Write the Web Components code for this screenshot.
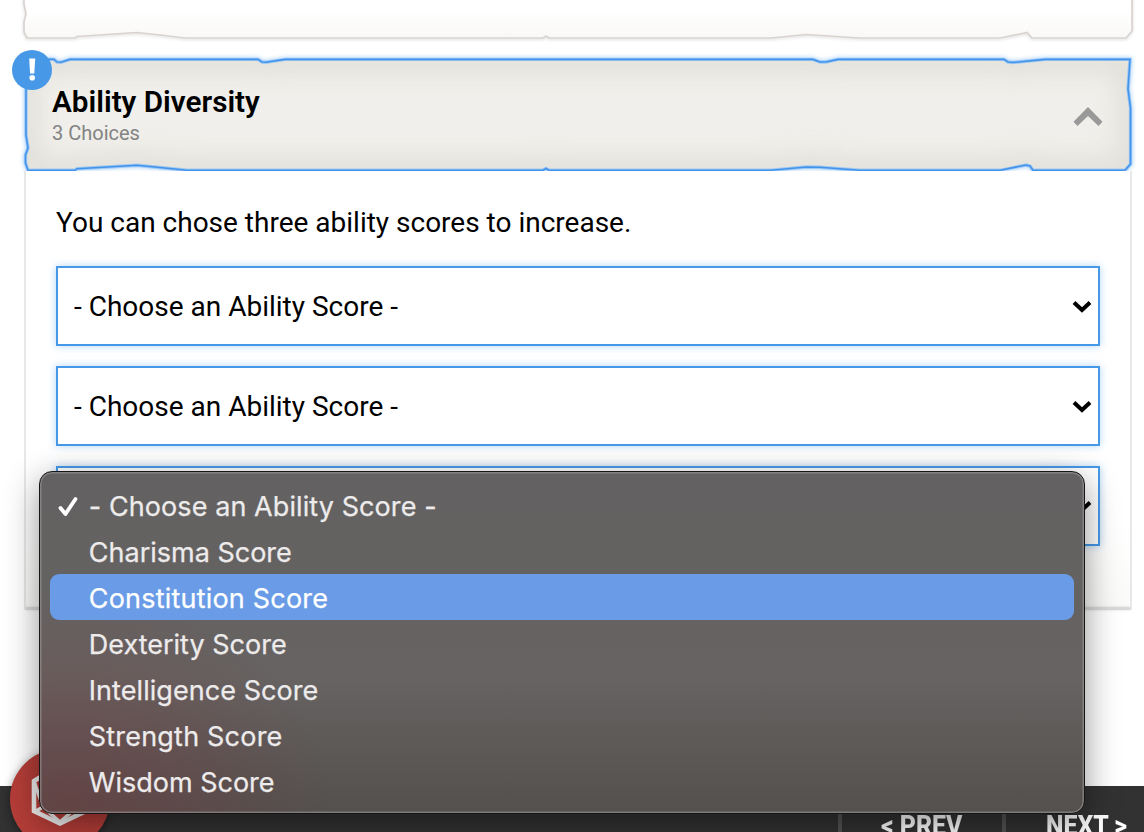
<!DOCTYPE html>
<html lang="en">
<head>
<meta charset="utf-8">
<title>Ability Diversity</title>
<style>
html,body{margin:0;height:832px;overflow:hidden;background:#fff}
body{font-family:Roboto,"Liberation Sans",sans-serif;color:#000}
</style>
</head>
<body>
<character-builder></character-builder>
<script>
const define = (name, html, init) => customElements.define(name, class extends HTMLElement {
  constructor() {
    super();
    this.attachShadow({mode: 'open'}).innerHTML = html;
  }
  connectedCallback() { if (init) init(this, this.shadowRoot); }
});

define('previous-card', `
<style>:host{display:block;height:44px}svg{display:block}</style>
<svg width="1144" height="44" viewBox="0 0 1144 44">
  <defs><linearGradient id="g" x1="0" y1="0" x2="0" y2="1"><stop offset=".35" stop-color="#fff"/><stop offset="1" stop-color="#f9f8f6"/></linearGradient>
  <filter id="b" x="-5%" y="-50%" width="110%" height="200%"><feGaussianBlur stdDeviation="1.6"/></filter></defs>
  <path d="M24-4V4L26 14 24 22V32L27 38H75L77 36.5 137 32.5 160 35 185 38H543L546 36 549 38H771L806 34.5 860 38H1000L1020 34 1027 32.5 1032 38H1126L1132 31V-4" fill="none" stroke="#bbb" stroke-width="2" opacity=".5" filter="url(#b)" transform="translate(0 1)"/>
  <path d="M24-4V4L26 14 24 22V32L27 38H75L77 36.5 137 32.5 160 35 185 38H543L546 36 549 38H771L806 34.5 860 38H1000L1020 34 1027 32.5 1032 38H1126L1132 31V-4" fill="url(#g)" stroke="#d9d3d0" stroke-width="1.7"/>
</svg>`);

define('choice-header', `
<style>
:host{display:flex;position:relative;height:114px;box-sizing:border-box;padding:0 41px 0 52px;align-items:center;justify-content:space-between}
.frame{position:absolute;left:0;top:-6px;z-index:0}
.copy,.chevron{position:relative;display:block}
.copy{padding-top:1px}
h2{margin:0;font-weight:600;font-size:29.7px;line-height:34px;letter-spacing:0;white-space:nowrap}
p{margin:0;font-size:20px;line-height:28px;color:#838383;letter-spacing:0}
.chevron{margin-top:3px}
.badge{position:absolute;left:12px;top:-8px;width:40px;height:40px;border-radius:50%;background:#4799e8}
.badge svg{display:block}
</style>
<svg class="frame" width="1144" height="126" viewBox="0 52 1144 126">
  <defs>
    <path id="p" d="M26 59.4H54L57 62 61 62.3 70 59.4H258L262 62 266 62.3 285 59.4H813L820 62 826 62 838 59.4H1004L1008 62 1013 62.5 1045 59.4H1130L1128 89 1130.5 108V164L1125 170.3H1033L1030 166 1026 165 1000 170.3H860L820 167.2 806 167 771 170.3H549L546 168.5 543 170.3H187L155 167 137 165.3 77 168.7 75 170.3H28L25.5 163V155L28 148 26 135Z"/>
    <clipPath id="c"><use href="#p"/></clipPath>
    <filter id="s" x="-10%" y="-50%" width="120%" height="200%"><feGaussianBlur stdDeviation="12"/></filter>
    <filter id="o" x="-5%" y="-20%" width="110%" height="140%"><feGaussianBlur stdDeviation="2"/></filter>
  </defs>
  <use href="#p" fill="none" stroke="#4799e8" stroke-width="4" opacity=".45" filter="url(#o)"/>
  <g clip-path="url(#c)"><use href="#p" fill="#f0efeb"/><use href="#p" fill="none" stroke="#d4d1c8" stroke-width="20" opacity=".62" filter="url(#s)"/></g>
  <use href="#p" fill="none" stroke="#83bdfa" stroke-width="3.4" opacity=".7"/>
  <use href="#p" fill="none" stroke="#4493ea" stroke-width="1.6"/>
</svg>
<div class="copy"><h2><slot></slot></h2><p><slot name="count"></slot></p></div>
<svg class="chevron" width="30" height="20" viewBox="0 0 30 20"><path d="M15 0 29.5 14.7 25.5 19 15 9 4.5 19 .5 14.7Z" fill="#999"/></svg>
<div class="badge"><svg width="40" height="40"><path d="M17.2 8.5h6l-.9 15h-4.2Z" fill="#fff"/><circle cx="20.2" cy="27.8" r="2.8" fill="#fff"/></svg></div>`);

define('ability-select', `
<style>
:host{display:flex;box-sizing:border-box;height:80px;border:2px solid #4799e8;background:#fff;box-shadow:0 0 8px rgba(71,153,232,.4);align-items:center;justify-content:space-between;padding:0 6px 0 16px;font-size:28px}
svg{display:block;margin-top:1px}
</style>
<span><slot></slot></span>
<svg width="20" height="14" viewBox="0 0 20 14"><path d="M2 2.5 10 10 18 2.5" fill="none" stroke="#000" stroke-width="4"/></svg>`);

define('choice-panel', `
<style>
:host{display:block;box-sizing:border-box;margin:0 12px 0 24px;height:439px;border:solid #e8e8e8;border-width:0 2px;padding:33px 30px 0;position:relative;background:linear-gradient(#fff 80%,#fafaf8)}
:host::after{content:"";position:absolute;left:0;right:0;bottom:0;height:3px;background:#dad9d7;box-shadow:0 0 3px #ddd}
p{margin:0;height:38px;line-height:38px;font-size:28px;white-space:nowrap}
.fields{display:flex;flex-direction:column;gap:20px;padding-top:24px}
</style>
<p><slot name="intro"></slot></p><div class="fields"><slot></slot></div>`);

define('page-footer', `
<style>
:host{display:grid;grid-template-columns:838px 164px 142px;height:46px;background:#323232;box-sizing:border-box;overflow:hidden;color:#fff;font-weight:800}
div{box-sizing:border-box;border-left:4px solid #535353;height:46px;padding-top:22px;font-size:27px;line-height:36px;white-space:pre}
div:first-of-type{border:0}
span{display:block;width:max-content;transform-origin:0 50%;transform:scaleX(.92)}
.prev{margin-left:39px}.next{margin-left:40px}
</style>
<div></div><div><span class="prev">&lt; PREV</span></div><div><span class="next">NEXT &gt;</span></div>`);

define('dice-button', `
<style>
:host{position:absolute;left:10px;top:749px;width:100px;height:100px;border-radius:50%;background:#b53d38;box-shadow:0 2px 8px rgba(0,0,0,.4)}
svg{display:block}
</style>
<svg width="100" height="100" viewBox="10 749 100 100" fill="none" stroke="#eee" stroke-width="4.6" stroke-linejoin="miter"><path d="M60 765 34 781V811L60 823.5 86 811V781Z"/><path d="M34 781 43 807 60 822 77 807 86 781M43 807H77L60 775Z M34 812 43 807M86 812 77 807" stroke-width="3.4"/></svg>`);

define('menu-item', `
<style>
:host{display:flex;height:46px;align-items:center;margin:0 9px;border-radius:9px;box-sizing:border-box;padding-top:2px;color:#edebeb}
:host([active]){background:#699be6;color:#fff}
svg{width:20px;height:22px;visibility:hidden;margin:0 10.4px 0 8.4px;flex:none}
:host([checked]) svg{visibility:visible}
span{white-space:nowrap;-webkit-text-stroke:.25px currentColor}
</style>
<svg viewBox="0 0 20 22"><path d="M2.5 13 7.5 19 17.5 4" fill="none" stroke="#fff" stroke-width="3.8" stroke-linecap="round" stroke-linejoin="round"/></svg><span><slot></slot></span>`,
(el, root) => { if (el.hasAttribute('tracking')) root.querySelector('span').style.letterSpacing = el.getAttribute('tracking'); });

define('option-menu', `
<style>
:host{position:absolute;left:39px;top:471px;width:1046px;height:343px;box-sizing:border-box;border:1px solid #161616;border-radius:13px;background:radial-gradient(ellipse 260px 210px at 30px 330px,rgba(125,45,50,.36),transparent),linear-gradient(#636161 0,#666362 60%,#53504e 100%);box-shadow:inset 0 0 0 1.5px rgba(160,158,157,.55),0 10px 34px rgba(0,0,0,.42);padding:10px 1px;font:400 27px Inter,"Liberation Sans",sans-serif}
</style><slot></slot>`);

define('character-builder', `
<style>
:host{display:flex;flex-direction:column;position:relative;width:1144px;height:832px;overflow:hidden;background:#fff}
choice-header{margin-top:14px}
page-footer{margin-top:auto}
choice-panel{margin-top:-1px}
</style>
<previous-card></previous-card>
<choice-header>Ability Diversity<span slot="count">3 Choices</span></choice-header>
<choice-panel>
  <span slot="intro">You can chose three ability scores to increase.</span>
  <ability-select>- Choose an Ability Score -</ability-select>
  <ability-select>- Choose an Ability Score -</ability-select>
  <ability-select></ability-select>
</choice-panel>
<page-footer></page-footer>
<dice-button></dice-button>
<option-menu>
  <menu-item checked tracking=".08px">- Choose an Ability Score -</menu-item>
  <menu-item>Charisma Score</menu-item>
  <menu-item active tracking=".2px">Constitution Score</menu-item>
  <menu-item>Dexterity Score</menu-item>
  <menu-item tracking=".06px">Intelligence Score</menu-item>
  <menu-item tracking=".2px">Strength Score</menu-item>
  <menu-item>Wisdom Score</menu-item>
</option-menu>`);
</script>
</body>
</html>
